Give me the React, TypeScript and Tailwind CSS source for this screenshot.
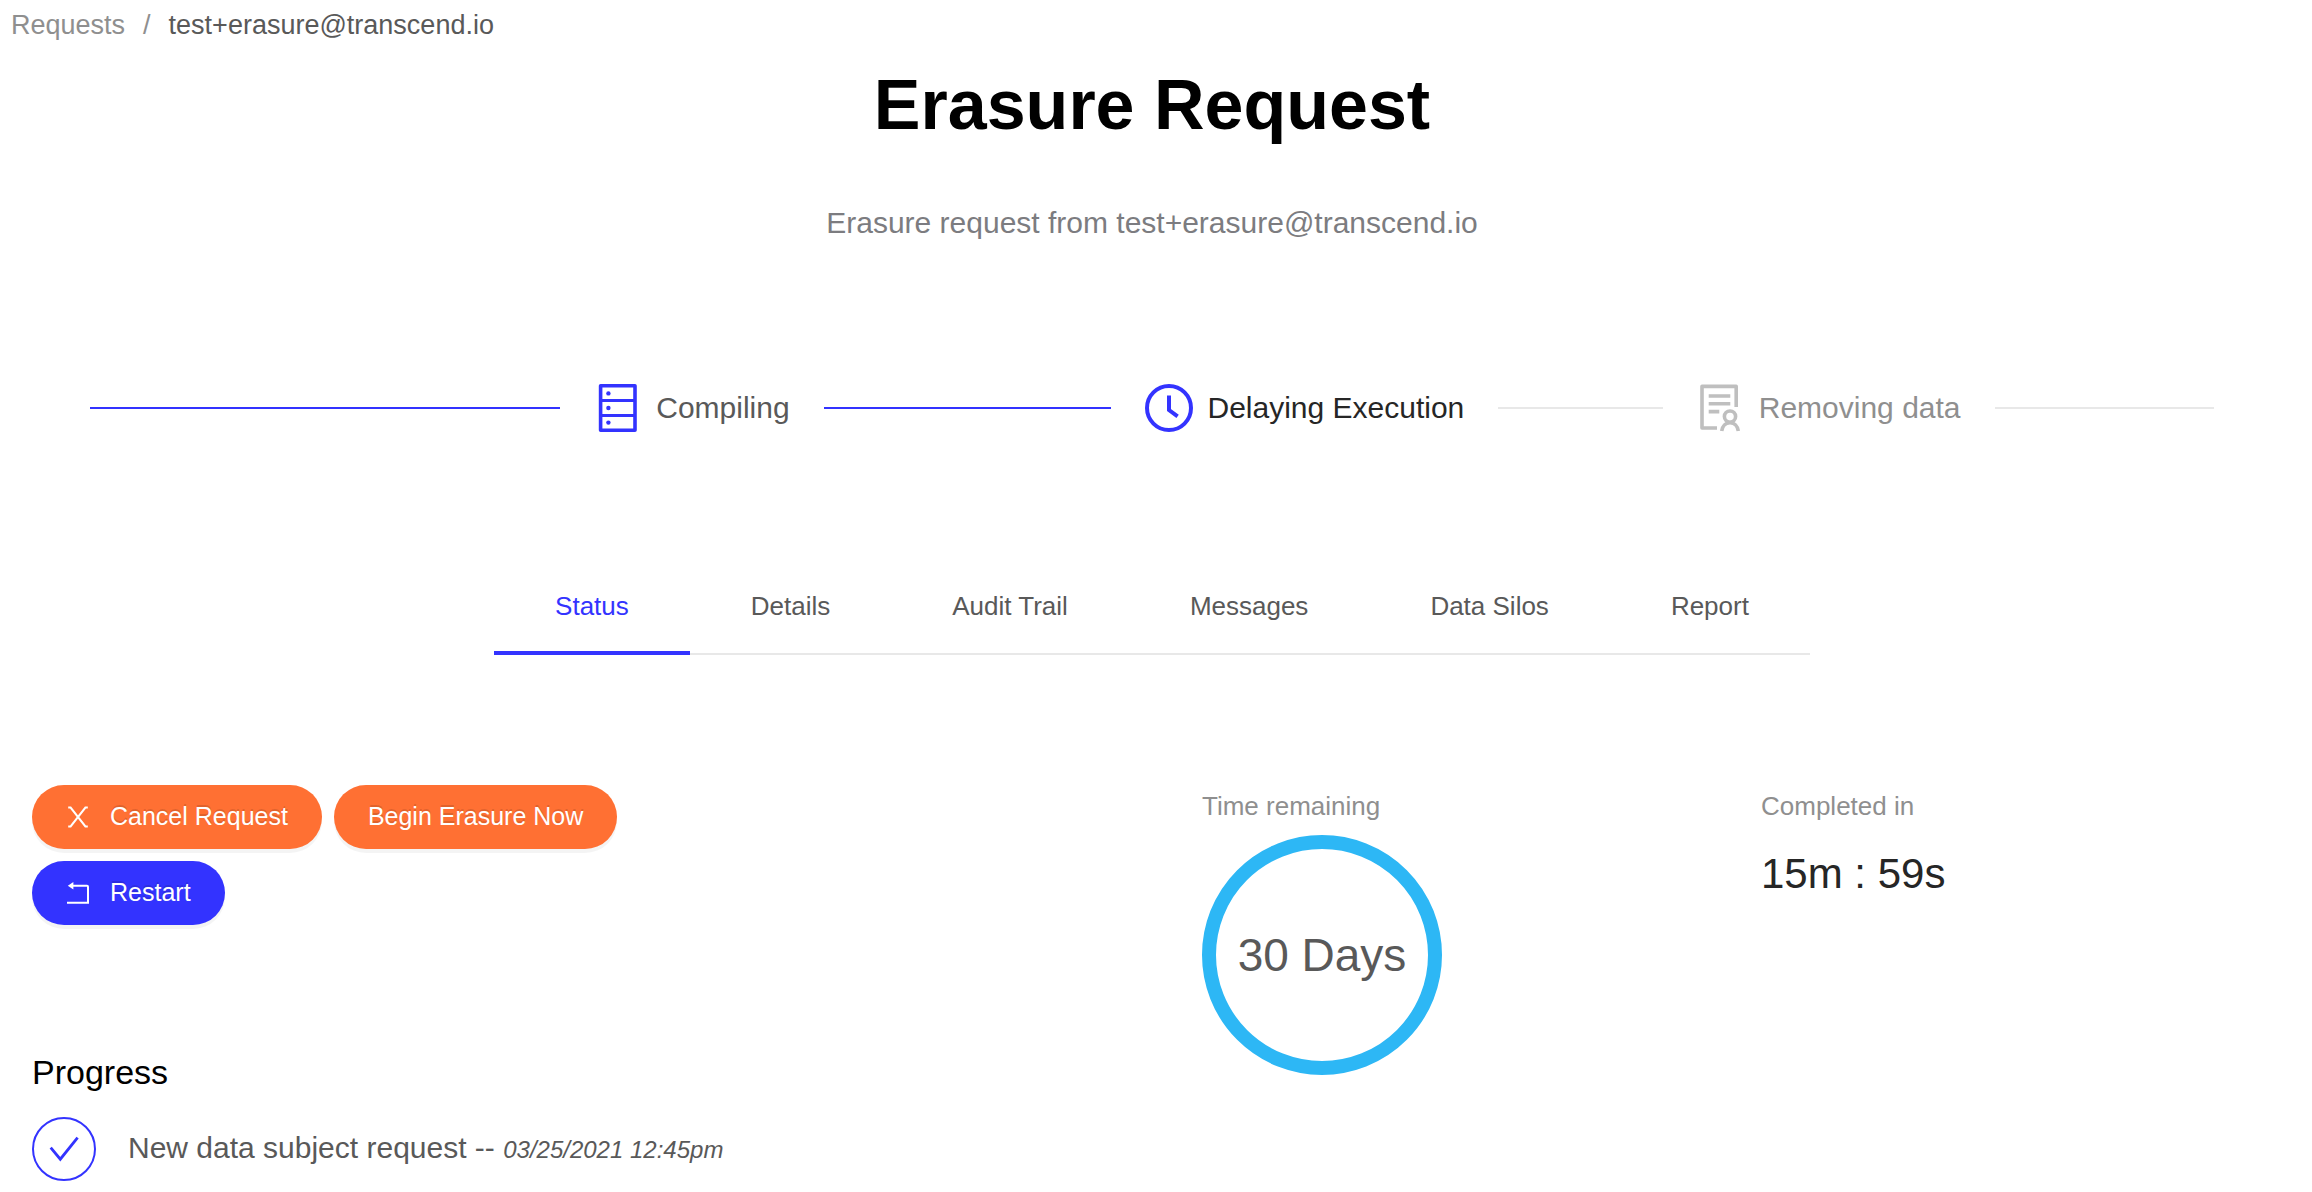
import { useState } from 'react';
import type { ReactNode } from 'react';

const tabs = ['Status', 'Details', 'Audit Trail', 'Messages', 'Data Silos', 'Report'];

function ServerIcon() {
  return (
    <svg viewBox="0 0 48 48" className="w-12 h-12 shrink-0 text-[#3333ff]" fill="none" stroke="currentColor" strokeWidth="3.6" aria-hidden="true">
      <rect x="6.6" y="1.8" width="34.4" height="44.4" strokeLinejoin="round" />
      <path d="M6.6 16.4H41M6.600 31.4H41" strokeWidth="3" />
      <g fill="currentColor" stroke="none">
        <circle cx="14.4" cy="9.4" r="2.2" />
        <circle cx="14.4" cy="24" r="2.2" />
        <circle cx="14.4" cy="38.6" r="2.2" />
      </g>
    </svg>
  );
}

function ClockIcon() {
  return (
    <svg viewBox="0 0 48 48" className="w-12 h-12 shrink-0 text-[#3333ff]" fill="none" stroke="currentColor" strokeWidth="4" aria-hidden="true">
      <circle cx="24" cy="24" r="22" />
      <path d="M24 11.5V26l8.6 6.4" />
    </svg>
  );
}

function RemoveDataIcon() {
  return (
    <svg viewBox="0 0 48 48" className="w-12 h-12 shrink-0 text-[#bfbfbf]" fill="none" stroke="currentColor" strokeWidth="3.6" aria-hidden="true">
      <path d="M20 44H5V2.4h34.2V23" strokeLinejoin="round" />
      <path d="M11.7 12h21.6M11.7 19.7h21.6M11.7 27.6h10.6" />
      <circle cx="33" cy="32.6" r="5.6" />
      <path d="M24.7 47c.6-5 4-8.4 8.3-8.4s7.7 3.4 8.3 8.4" />
    </svg>
  );
}

function CloseIcon() {
  return (
    <svg viewBox="0 0 24 24" className="w-6 h-6" fill="none" stroke="currentColor" strokeWidth="2" aria-hidden="true">
      <path d="M2.2 2.6H4.600L19.400 21.4H21.8M21.8 2.6H19.400L4.600 21.4H2.2" />
    </svg>
  );
}

function RestartIcon() {
  return (
    <svg viewBox="0 0 24 24" className="w-6 h-6" fill="none" stroke="currentColor" strokeWidth="2" aria-hidden="true">
      <path d="M5 4.7H21Q22 4.7 22 5.7V21.800H1" />
      <path d="M1.8 4.7 7.4 1v7.4z" fill="currentColor" stroke="none" />
    </svg>
  );
}

function CheckIcon() {
  return (
    <svg viewBox="0 0 64 64" className="w-16 h-16 shrink-0 text-[#3333ff]" fill="none" stroke="currentColor" aria-hidden="true">
      <circle cx="32" cy="32" r="31" strokeWidth="2" />
      <path d="M18.7 30.6 28.3 42.2 45.6 20.7" strokeWidth="2.8" />
    </svg>
  );
}

function Step({ icon, label, labelClass, lineClass }: { icon: ReactNode; label: string; labelClass: string; lineClass: string }) {
  return (
    <li className="flex-[11] flex items-center">
      {icon}
      <span className={`ml-[14px] mr-[34px] text-[30px] leading-10 whitespace-nowrap ${labelClass}`}>{label}</span>
      <span className={`flex-1 h-0.5 ${lineClass}`} />
    </li>
  );
}

function PillButton({ icon, color, children }: { icon?: ReactNode; color: string; children: ReactNode }) {
  return (
    <button className={`h-16 px-[34px] rounded-full flex items-center gap-5 text-[25px] text-white whitespace-nowrap shadow-[0_4px_0_rgba(0,0,0,0.045)] [text-shadow:0_-2px_0_rgba(0,0,0,0.12)] cursor-pointer ${color}`}>
      {icon}
      {children}
    </button>
  );
}

export default function App() {
  const [activeTab, setActiveTab] = useState('Status');

  return (
    <div className="min-h-screen bg-white pr-2 font-['Liberation_Sans',Arial,sans-serif] text-[#595959]">
      <nav aria-label="Breadcrumb" className="pt-[7px] pl-[11px] flex gap-[18px] text-[27px] leading-9">
        <a href="#requests" className="text-[#8f8f8f]">Requests</a>
        <span className="text-[#8f8f8f]">/</span>
        <span>test+erasure@transcend.io</span>
      </nav>

      <header className="mt-5 text-center">
        <h1 className="text-[70px] leading-[84px] font-bold text-black">Erasure Request</h1>
        <p className="mt-14 text-[30px] leading-10 text-[#7c7c80]">Erasure request from test+erasure@transcend.io</p>
      </header>

      <ol className="mt-[141px] mx-[90px] flex items-center gap-[34px]">
        <li className="flex-[10] h-0.5 bg-[#3333ff]" aria-hidden="true" />
        <Step icon={<ServerIcon />} label="Compiling" labelClass="text-[#595959]" lineClass="bg-[#3333ff]" />
        <Step icon={<ClockIcon />} label="Delaying Execution" labelClass="text-[#262626]" lineClass="bg-[#e8e8e8]" />
        <Step icon={<RemoveDataIcon />} label="Removing data" labelClass="text-[#8f8f8f]" lineClass="bg-[#e8e8e8]" />
      </ol>

      <div className="mt-[129px] flex justify-center">
        <div role="tablist" className="flex border-b-2 border-[#e8e8e8]">
          {tabs.map((tab) => (
            <button
              key={tab}
              role="tab"
              aria-selected={tab === activeTab}
              onClick={() => setActiveTab(tab)}
              className={`-mb-0.5 px-[61px] py-[27px] border-b-4 text-[26px] leading-9 whitespace-nowrap cursor-pointer ${tab === activeTab ? 'border-[#3333ff] text-[#3333ff]' : 'border-transparent'}`}
            >
              {tab}
            </button>
          ))}
        </div>
      </div>

      <main className="mt-[130px] grid grid-cols-2 items-start">
        <div className="pl-8">
          <div className="max-w-2xl flex flex-wrap gap-3">
            <PillButton color="bg-[#ff7033]" icon={<CloseIcon />}>Cancel Request</PillButton>
            <PillButton color="bg-[#ff7033]">Begin Erasure Now</PillButton>
            <PillButton color="bg-[#3333ff]" icon={<RestartIcon />}>Restart</PillButton>
          </div>

          <h2 className="mt-[125px] text-[34px] leading-[44px] text-black">Progress</h2>
          <ul className="mt-[23px]">
            <li className="flex items-center gap-8">
              <CheckIcon />
              <span className="text-[30px] leading-10">
                New data subject request -- <em className="text-[24px]">03/25/2021 12:45pm</em>
              </span>
            </li>
          </ul>
        </div>

        <div className="pt-[3px] pl-[50px] grid grid-cols-2 gap-4 items-start">
          <div>
            <p className="text-[26px] leading-9 text-[#8f8f8f]">Time remaining</p>
            <div className="mt-[11px] w-60 h-60 rounded-full border-[14px] border-[#2db7f5] flex items-center justify-center text-[46px] whitespace-nowrap">
              30 Days
            </div>
          </div>
          <div>
            <p className="text-[26px] leading-9 text-[#8f8f8f]">Completed in</p>
            <p className="mt-[22px] text-[42px] leading-[56px] text-[#262626]">15m : 59s</p>
          </div>
        </div>
      </main>
    </div>
  );
}
